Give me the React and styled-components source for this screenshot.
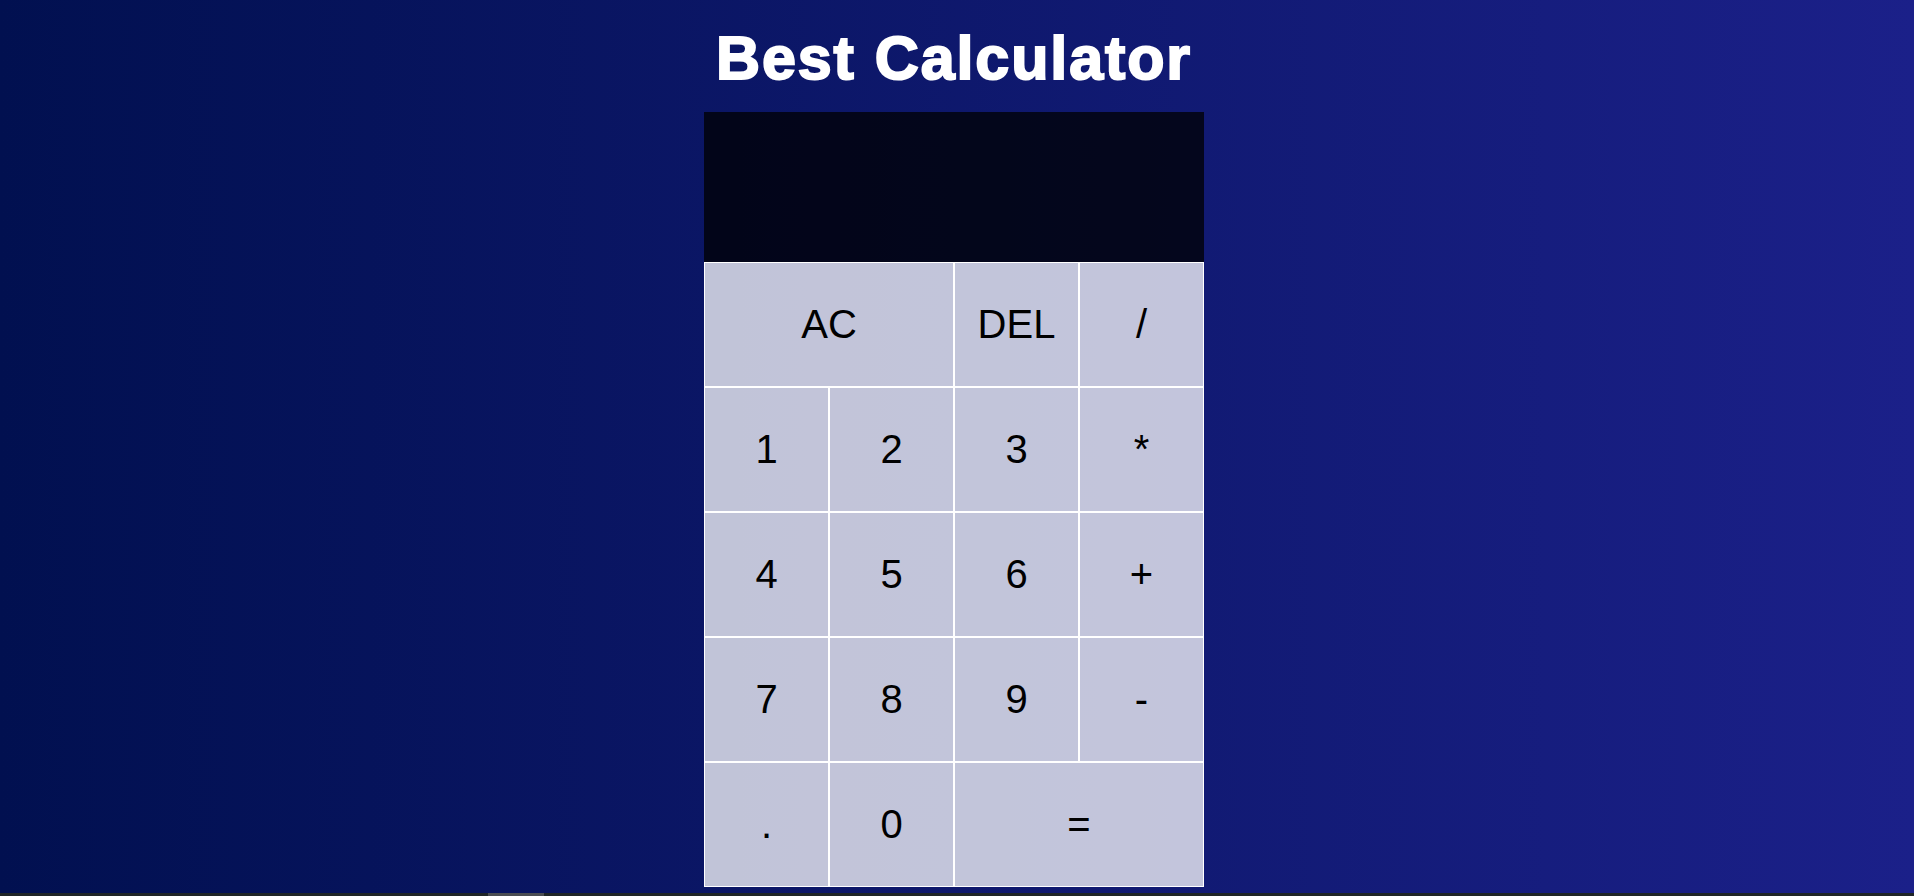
import React from "react";
import styled, { createGlobalStyle } from "styled-components";

const GlobalStyle = createGlobalStyle`
  *, *::before, *::after {
    box-sizing: border-box;
  }
  body {
    margin: 0;
    font-family: "Liberation Sans", Arial, sans-serif;
    background: linear-gradient(to right, #011050, #1b2089);
    min-height: 100vh;
  }
`;

const Page = styled.div`
  min-height: 100vh;
  display: flex;
  flex-direction: column;
`;

const Main = styled.main`
  flex: 1;
  display: flex;
  flex-direction: column;
  align-items: center;
  padding-right: 6px;
`;

const Title = styled.h1`
  margin: 24px 0 20px;
  font-size: 61px;
  line-height: 68px;
  font-weight: 700;
  letter-spacing: 1.9px;
  color: #ffffff;
  -webkit-text-stroke: 2px #ffffff;
`;

const Calculator = styled.div`
  display: grid;
  grid-template-columns: repeat(4, 125px);
  grid-template-rows: 150px repeat(5, 125px);
`;

const Output = styled.div`
  grid-column: 1 / -1;
  background-color: rgba(0, 0, 0, 0.75);
`;

const Key = styled.button`
  grid-column: span ${(p) => p.$span || 1};
  border: 1px solid #ffffff;
  background-color: rgba(255, 255, 255, 0.75);
  font-family: "Liberation Sans", Arial, sans-serif;
  font-size: 40px;
  color: #000000;
  padding: 0;
  cursor: pointer;
  outline: none;

  &:hover {
    background-color: rgba(255, 255, 255, 0.9);
  }
`;

const ScrollTrack = styled.div`
  height: 3px;
  background: #1f2527;
  display: flex;
  padding-left: 488px;
`;

const ScrollThumb = styled.div`
  width: 56px;
  background: #4a4d52;
`;

const keys = [
  ["AC", 2],
  ["DEL"],
  ["/"],
  ["1"],
  ["2"],
  ["3"],
  ["*"],
  ["4"],
  ["5"],
  ["6"],
  ["+"],
  ["7"],
  ["8"],
  ["9"],
  ["-"],
  ["."],
  ["0"],
  ["=", 2],
];

export default function App() {
  return (
    <>
      <GlobalStyle />
      <Page>
        <Main>
          <Title>Best Calculator</Title>
          <Calculator>
            <Output />
            {keys.map(([label, span]) => (
              <Key key={label} $span={span}>
                {label}
              </Key>
            ))}
          </Calculator>
        </Main>
        <ScrollTrack>
          <ScrollThumb />
        </ScrollTrack>
      </Page>
    </>
  );
}
